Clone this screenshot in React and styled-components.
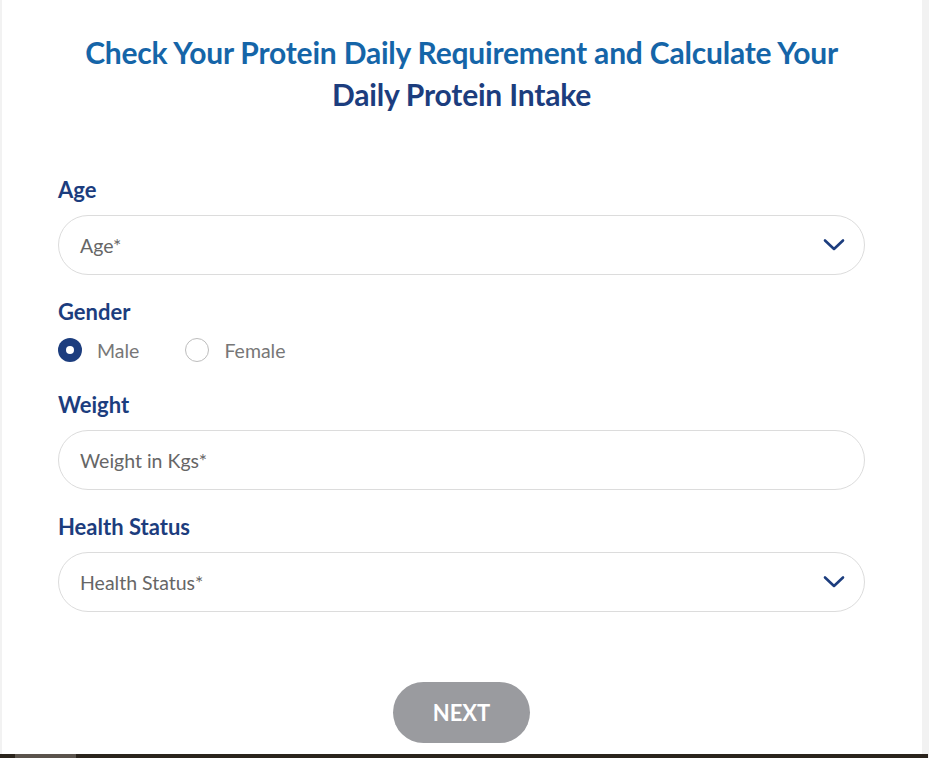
import { useState } from 'react';
import styled, { createGlobalStyle } from 'styled-components';

const Global = createGlobalStyle`
  html, body {
    margin: 0;
    padding: 0;
    background: #f2f2f2;
    font-family: "Lato", "Noto Sans", sans-serif;
  }
  * { box-sizing: border-box; }
`;

function Chevron() {
  return (
    <svg width="22" height="14" viewBox="0 0 22 14" fill="none">
      <path d="M2 2.5 L11 11 L20 2.5" stroke="#1c3d7e" strokeWidth="2.6" strokeLinecap="round" strokeLinejoin="round" />
    </svg>
  );
}

export default function App() {
  const [gender, setGender] = useState('male');

  return (
    <Page>
      <Global />
      <Card>
        <Title>
          <span className="top">Check Your Protein Daily Requirement and Calculate Your</span>
          <span className="bottom">Daily Protein Intake</span>
        </Title>

        <Form onSubmit={e => e.preventDefault()}>
          <Field>
            <Label>Age</Label>
            <Pill>
              <Placeholder>Age*</Placeholder>
              <Chevron />
            </Pill>
          </Field>

          <Field gap={7}>
            <Label>Gender</Label>
            <Radios>
              <RadioOption onClick={() => setGender('male')}>
                <Dot checked={gender === 'male'} /> Male
              </RadioOption>
              <RadioOption onClick={() => setGender('female')}>
                <Dot checked={gender === 'female'} /> Female
              </RadioOption>
            </Radios>
          </Field>

          <Field>
            <Label>Weight</Label>
            <Pill>
              <Placeholder>Weight in Kgs*</Placeholder>
            </Pill>
          </Field>

          <Field>
            <Label>Health Status</Label>
            <Pill>
              <Placeholder>Health Status*</Placeholder>
              <Chevron />
            </Pill>
          </Field>

          <Actions>
            <NextButton type="submit">NEXT</NextButton>
          </Actions>
        </Form>
      </Card>
      <BottomBar>
        <Thumb />
      </BottomBar>
    </Page>
  );
}

const Page = styled.div`
  height: 758px;
  display: flex;
  flex-direction: column;
  padding-left: 2px;
  padding-right: 7px;
  overflow: hidden;
`;

const Card = styled.main`
  flex: 1;
  background: #fff;
  padding: 31px 57px 0 56px;
`;

const Title = styled.h1`
  margin: 0;
  text-align: center;
  font-size: 30px;
  line-height: 42px;
  font-weight: 700;
  letter-spacing: -0.2px;

  span { display: block; }
  .top { color: #1565a8; }
  .bottom { color: #1c3d7e; }
`;

const Form = styled.form`
  margin-top: 62px;
  display: flex;
  flex-direction: column;
  gap: 24px;
`;

const Field = styled.div`
  display: flex;
  flex-direction: column;
  gap: ${p => p.gap ?? 12}px;
`;

const Label = styled.label`
  font-size: 22px;
  font-weight: 700;
  color: #1c3d7e;
  line-height: 26px;
`;

const Pill = styled.div`
  height: 60px;
  border: 1px solid #dcdcdc;
  border-radius: 30px;
  display: flex;
  align-items: center;
  justify-content: space-between;
  padding: 0 19px 0 21px;
`;

const Placeholder = styled.span`
  font-size: 19.5px;
  color: #666;
`;

const Radios = styled.div`
  display: flex;
  align-items: center;
  height: 36px;
  gap: 46px;
`;

const RadioOption = styled.div`
  display: flex;
  align-items: center;
  gap: 15px;
  font-size: 19.5px;
  color: #777;
  cursor: pointer;
  user-select: none;
`;

const Dot = styled.span`
  width: 24px;
  height: 24px;
  border-radius: 50%;
  background: ${p => (p.checked ? '#1c3d7e' : '#fff')};
  border: ${p => (p.checked ? 'none' : '1px solid #bdbdbd')};
  display: flex;
  align-items: center;
  justify-content: center;

  &::after {
    content: '';
    width: 8px;
    height: 8px;
    border-radius: 50%;
    background: #fff;
    display: ${p => (p.checked ? 'block' : 'none')};
  }
`;

const Actions = styled.div`
  display: flex;
  justify-content: center;
  margin-top: 46px;
`;

const NextButton = styled.button`
  width: 137px;
  height: 61px;
  border: none;
  border-radius: 31px;
  background: #9a9b9f;
  color: #fff;
  font-family: inherit;
  font-size: 22px;
  font-weight: 700;
  cursor: pointer;
`;

const BottomBar = styled.div`
  height: 4px;
  margin-left: -2px;
  margin-right: -6px;
  background: #2a241c;
  padding-left: 15px;
`;

const Thumb = styled.div`
  width: 61px;
  height: 100%;
  background: #5a534c;
`;
